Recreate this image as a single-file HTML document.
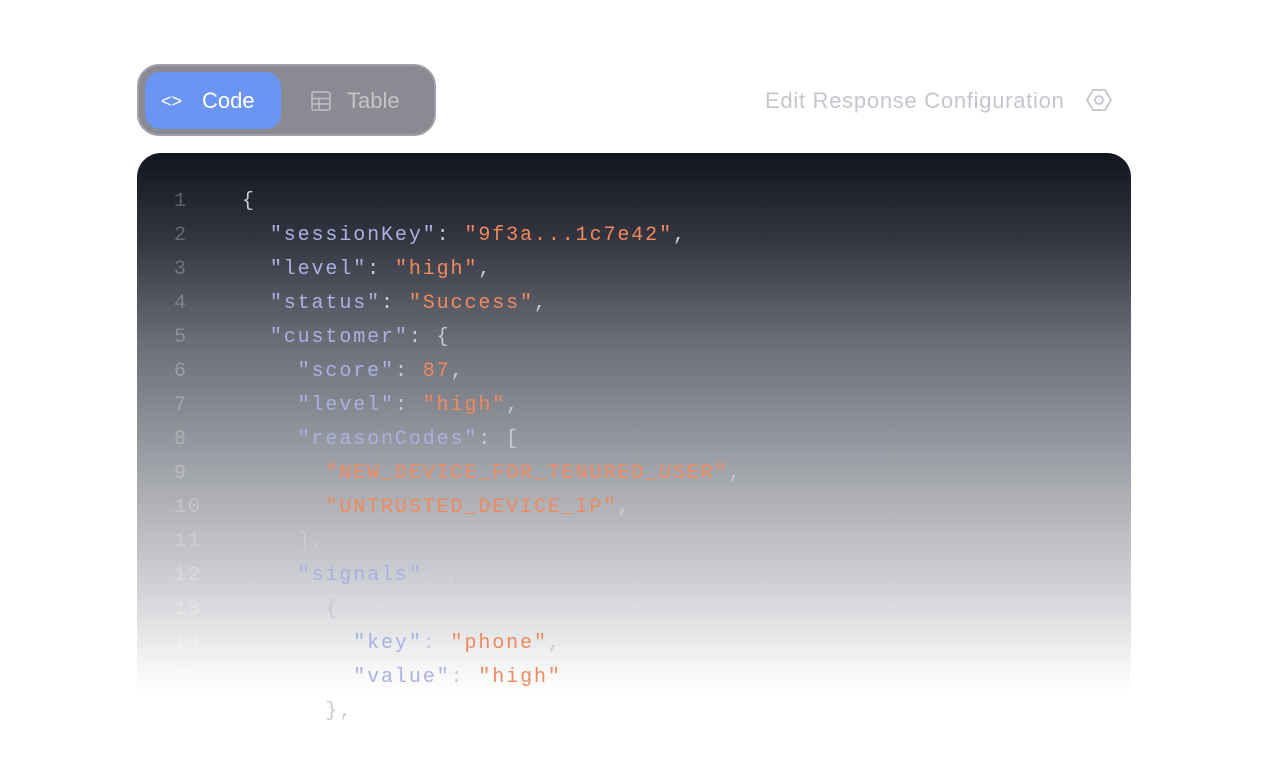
<!DOCTYPE html>
<html><head><style>
body{margin:0;width:1268px;height:752px;background:#fff;position:relative;overflow:hidden;font-family:"Liberation Sans",sans-serif}
.tog{position:absolute;left:137px;top:64px;width:295px;height:68px;background:#8a8b92;border:2px solid #a0a1a8;border-radius:22px}
.code{position:absolute;left:6px;top:6px;width:136px;height:57px;background:#6a95f2;border-radius:15px;color:#fff;font-size:22px}
.code span{position:absolute;top:16px}
.tab{position:absolute;top:22px;color:#c3c4ca;font-size:22px}
.cfg{position:absolute;left:765px;top:88px;font-size:22px;letter-spacing:0.72px;color:#c4c6ce}
.card{position:absolute;left:137px;top:153px;width:994px;height:620px;border-radius:24px;background:linear-gradient(#12141e 0px,#353742 90px,#6a6c76 187px,#aeb0b6 347px,#d6d7da 447px,#f4f4f5 510px,#fff 540px)}
pre{position:absolute;margin:0;font-family:"Liberation Mono",monospace;font-size:20px;line-height:34px;letter-spacing:1.9px;color:#c8cad4}
.ln{left:174px;top:185px;color:rgba(255,255,255,0.26)}
.src{left:242px;top:185px}
.k{color:#aab0e2}.s{color:#f08a5d}
</style></head><body>
<div class="tog">
 <div class="code"><span style="left:16px;font-size:18px;top:19px">&lt;&gt;</span><span style="left:57px">Code</span></div>
 <svg style="position:absolute;left:172px;top:25px" width="20" height="20" viewBox="0 0 20 20" fill="none" stroke="#b8b9c0" stroke-width="1.8"><rect x="1" y="1" width="18" height="18" rx="2"/><path d="M1 7.5h18M1 13h18M8 7.5v11.5"/></svg>
 <div class="tab" style="left:208px">Table</div>
</div>
<div class="cfg">Edit Response Configuration</div>
<svg style="position:absolute;left:1086px;top:88px" width="26" height="24" viewBox="0 0 26 24" fill="none" stroke="#c4c6ce" stroke-width="1.8"><path d="M7 2h12l6 10-6 10H7L1 12z"/><circle cx="13" cy="12" r="4"/></svg>
<div class="card"></div>
<pre class="ln">1
2
3
4
5
6
7
8
9
10
11
12
13
14
15
16</pre>
<pre class="src">{
  <span class="k">"sessionKey"</span>: <span class="s">"9f3a...1c7e42"</span>,
  <span class="k">"level"</span>: <span class="s">"high"</span>,
  <span class="k">"status"</span>: <span class="s">"Success"</span>,
  <span class="k">"customer"</span>: {
    <span class="k">"score"</span>: <span class="s">87</span>,
    <span class="k">"level"</span>: <span class="s">"high"</span>,
    <span class="k">"reasonCodes"</span>: [
      <span class="s">"NEW_DEVICE_FOR_TENURED_USER"</span>,
      <span class="s">"UNTRUSTED_DEVICE_IP"</span>,
    ],
    <span class="k">"signals"</span>: [
      {
        <span class="k">"key"</span>: <span class="s">"phone"</span>,
        <span class="k">"value"</span>: <span class="s">"high"</span>
      },</pre>
</body></html>
